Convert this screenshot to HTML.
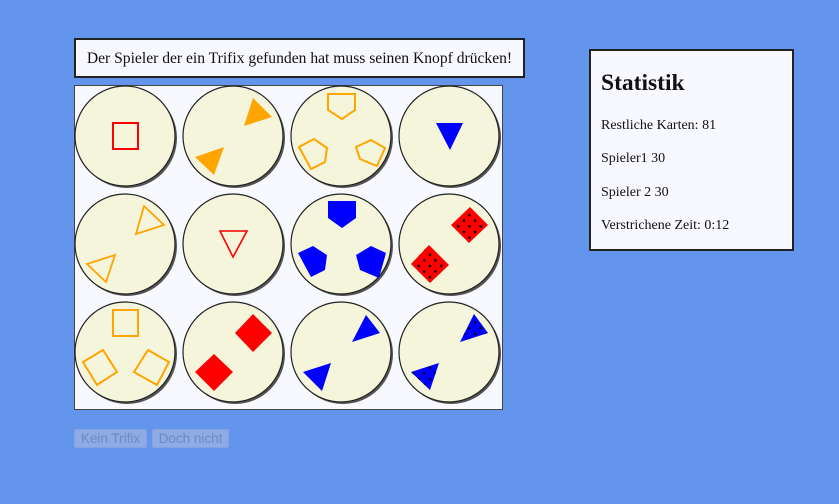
<!DOCTYPE html>
<html><head><meta charset="utf-8"><style>
html,body{margin:0;padding:0;background:#6495ED;width:839px;height:504px;overflow:hidden;font-family:"Liberation Serif",serif;}
.msg{position:absolute;left:74px;top:38px;height:36px;border:2px solid #222;background:#F8F8FF;font-size:15.6px;line-height:37px;text-align:center;color:#111;box-sizing:content-box;width:447px;white-space:nowrap;}
.stat{position:absolute;left:589px;top:49px;width:201px;height:198px;border:2px solid #222;background:#F8F8FF;color:#111;}
.stat h2{margin:0;position:absolute;left:10px;top:19px;font-size:23.5px;font-weight:bold;}
.stat p{margin:0;position:absolute;left:10px;font-size:14px;}
svg{position:absolute;left:0;top:0;}
.btn{position:absolute;top:429px;height:19px;background:#8eabe6;border:1px solid #86a3df;color:#6f8ac4;font-family:"Liberation Sans",sans-serif;font-size:13.5px;line-height:18px;text-align:center;border-radius:2px;box-sizing:border-box;white-space:nowrap;}
</style></head><body>
<div class="msg">Der Spieler der ein Trifix gefunden hat muss seinen Knopf drücken!</div>
<div class="stat"><h2>Statistik</h2>
<p style="top:67px">Restliche Karten: 81</p>
<p style="top:100px">Spieler1 30</p>
<p style="top:134px">Spieler 2 30</p>
<p style="top:167px">Verstrichene Zeit: 0:12</p></div>
<svg width="839" height="504">
<defs>
<pattern id="dots" width="8" height="8" patternUnits="userSpaceOnUse" patternTransform="rotate(45)">
<rect width="8" height="8" fill="none"/><circle cx="4" cy="4" r="1.3" fill="#000"/></pattern>
</defs>
<rect x="74.5" y="85.5" width="428" height="324" fill="#F8F8FF" stroke="#444" stroke-width="1"/>
<g fill="#555">
<circle cx="127" cy="138" r="50"/><circle cx="235" cy="138" r="50"/><circle cx="343" cy="138" r="50"/><circle cx="451" cy="138" r="50"/>
<circle cx="127" cy="246" r="50"/><circle cx="235" cy="246" r="50"/><circle cx="343" cy="246" r="50"/><circle cx="451" cy="246" r="50"/>
<circle cx="127" cy="354" r="50"/><circle cx="235" cy="354" r="50"/><circle cx="343" cy="354" r="50"/><circle cx="451" cy="354" r="50"/>
</g>
<g fill="#F5F5DC" stroke="#222" stroke-width="1.2">
<circle cx="125" cy="136" r="50"/><circle cx="233" cy="136" r="50"/><circle cx="341" cy="136" r="50"/><circle cx="449" cy="136" r="50"/>
<circle cx="125" cy="244" r="50"/><circle cx="233" cy="244" r="50"/><circle cx="341" cy="244" r="50"/><circle cx="449" cy="244" r="50"/>
<circle cx="125" cy="352" r="50"/><circle cx="233" cy="352" r="50"/><circle cx="341" cy="352" r="50"/><circle cx="449" cy="352" r="50"/>
</g>
<rect x="113" y="123" width="25" height="26" fill="none" stroke="red" stroke-width="2"/>
<polygon points="244,126 253,98 272,117" fill="orange"/>
<polygon points="195,157 224,147 214,175" fill="orange"/>
<g fill="none" stroke="orange" stroke-width="2">
<polygon points="328,94 355,94 355,110 342,119 328,110"/>
<polygon points="299,147 314,139 327,148 325,162 311,169"/>
<polygon points="356,147 371,140 385,148 377,166 360,159"/>
</g>
<polygon points="436,123 463,123 450,150" fill="blue"/>
<g fill="none" stroke="orange" stroke-width="1.8">
<polygon points="136,234 144,206 164,225"/>
<polygon points="87,264 115,255 106,282"/>
</g>
<polygon points="220,231 247,231 233,257" fill="none" stroke="red" stroke-width="1.6"/>
<g fill="blue">
<polygon points="328,201 356,201 356,218 342,228 328,218"/>
<polygon points="298,253 313,246 327,255 325,270 311,277"/>
<polygon points="356,255 371,246 386,253 379,278 360,270"/>
</g>
<polygon points="470,207 488,225 469,243 451,225" fill="red"/>
<polygon points="470,207 488,225 469,243 451,225" fill="url(#dots)"/>
<polygon points="429,245 449,265 430,283 411,264" fill="red"/>
<polygon points="429,245 449,265 430,283 411,264" fill="url(#dots)"/>
<g fill="none" stroke="orange" stroke-width="2">
<rect x="113" y="310" width="25" height="26"/>
<polygon points="83,362 103,350 117,372 97,385"/>
<polygon points="134,372 148,350 169,362 157,385"/>
</g>
<polygon points="253,314 272,333 253,352 235,333" fill="red"/>
<polygon points="214,354 233,372 214,391 195,372" fill="red"/>
<polygon points="352,342 366,315 380,333" fill="blue"/>
<polygon points="303,372 331,363 322,391" fill="blue"/>
<polygon points="460,342 474,314 488,333" fill="blue"/>
<polygon points="460,342 474,314 488,333" fill="url(#dots)"/>
<polygon points="411,372 439,363 430,390" fill="blue"/>
<polygon points="411,372 439,363 430,390" fill="url(#dots)"/>
</svg>
<div class="btn" style="left:74px;width:73px;">Kein Trifix</div>
<div class="btn" style="left:152px;width:77px;">Doch nicht</div>
</body></html>
